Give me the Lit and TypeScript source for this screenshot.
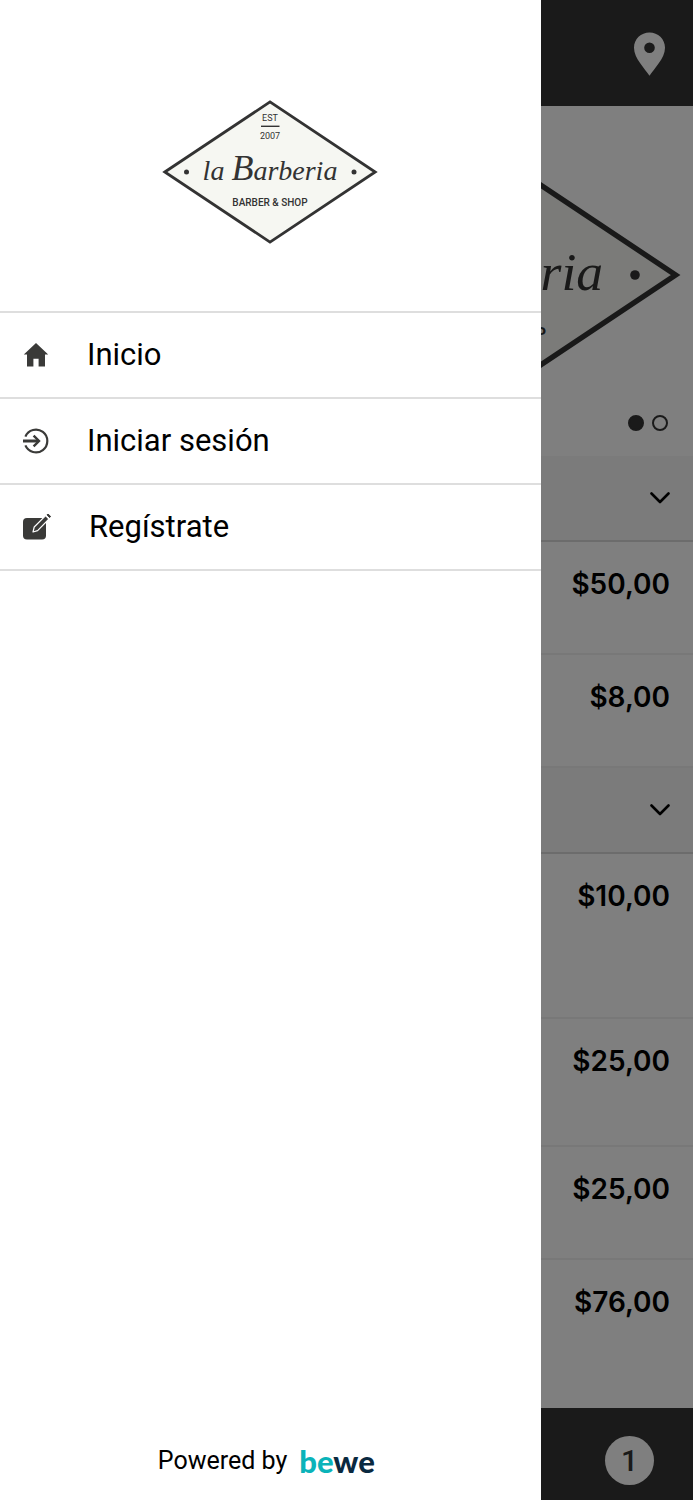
import { LitElement, html, css, svg } from "lit";
import { customElement, property } from "lit/decorators.js";

const ink = "#333333";

const icons = {
  home: html`<svg class="icon" width="26" height="26" viewBox="0 0 26 26" aria-hidden="true">
    <path fill="#3a3a38" d="M13 1 0.8 12.400H4V24.600H10.400V16.800H15.600V24.600H22V12.400H25.200Z" />
  </svg>`,
  login: html`<svg class="icon" width="26" height="26" viewBox="0 0 26 26" fill="none" stroke="#3a3a38" aria-hidden="true">
    <path stroke-width="2.200" d="M2.400 8.600A11.400 11.400 0 1 1 2.400 17.400" />
    <path stroke-width="3" d="M0 13H15" />
    <path stroke-width="2.400" d="M10.600 7.600 16 13 10.600 18.400" />
  </svg>`,
  register: html`<svg class="icon" width="28" height="26" viewBox="0 0 28 26" aria-hidden="true">
    <rect x="0" y="4" width="23" height="21.500" rx="4" fill="#3a3a38" />
    <path d="M10 18 11.200 13 22.600 1.600 26 5 14.600 16.600Z" fill="#3a3a38" stroke="#ffffff" stroke-width="1.200" stroke-linejoin="round" />
    <path d="M24 0.800 25 0 27.600 2.400 26.600 3.600Z" fill="#3a3a38" stroke="#3a3a38" />
  </svg>`,
};

@customElement("barber-logo")
export class BarberLogo extends LitElement {
  static styles = css`
    :host {
      display: block;
    }
    .mark {
      display: block;
      width: 100%;
      height: auto;
    }
    .script {
      font: italic 28px "Liberation Serif", serif;
    }
    .capital {
      font-size: 36px;
    }
    .name {
      font: 500 10px Roboto, sans-serif;
    }
    .small {
      font: 9px Roboto, sans-serif;
    }
  `;

  render() {
    return html`<svg class="mark" viewBox="0 0 216 144" role="img" aria-label="la Barberia Barber & Shop">
      ${svg`
        <path d="M2.800 72 108 1.900 213.200 72 108 142.100Z" fill="#f6f7f2" stroke=${ink} stroke-width="2.800" />
        <circle cx="24.500" cy="72" r="2.500" fill=${ink} />
        <circle cx="192" cy="72" r="2.500" fill=${ink} />
        <path d="M99 26.300H117.500" stroke=${ink} stroke-width="1.400" />
        <g fill=${ink} text-anchor="middle">
          <text class="small" x="108" y="21">EST</text>
          <text class="small" x="108" y="39">2007</text>
          <text class="script" x="108" y="80">la <tspan class="capital">B</tspan>arberia</text>
          <text class="name" x="108" y="106">BARBER &amp; SHOP</text>
        </g>
      `}
    </svg>`;
  }
}

@customElement("price-row")
export class PriceRow extends LitElement {
  @property() amount = "";

  static styles = css`
    :host {
      display: flex;
      justify-content: flex-end;
      box-sizing: border-box;
      padding: 25px 23px 0 24px;
      border-bottom: 2px solid #f0f0f0;
    }
    .amount {
      font: 600 28px/34px Inter, sans-serif;
      color: #000000;
    }
  `;

  render() {
    return html`<span class="amount">${this.amount}</span>`;
  }
}

@customElement("app-root")
export class AppRoot extends LitElement {
  static styles = css`
    :host {
      display: block;
      position: relative;
      min-height: 100vh;
      overflow: hidden;
      font-family: Roboto, sans-serif;
      color: #000000;
    }
    .page {
      display: flex;
      flex-direction: column;
      min-height: 100vh;
      background: #ffffff;
    }
    .bar {
      display: flex;
      align-items: center;
      justify-content: flex-end;
      box-sizing: border-box;
      background: #343434;
    }
    .top {
      height: 106px;
      padding: 2px 28px 0 0;
    }
    .plain {
      display: block;
      padding: 0;
      border: 0;
      background: none;
      font: inherit;
      color: inherit;
    }
    .hero {
      display: flex;
      flex-direction: column;
      align-items: flex-end;
      gap: 2px;
      padding: 31px 12px 25px;
    }
    .hero-logo {
      width: 414px;
    }
    .dots {
      display: flex;
      gap: 8px;
      padding-right: 13px;
    }
    .dot {
      box-sizing: border-box;
      width: 16px;
      height: 16px;
      padding: 0;
      border: 2px solid #343434;
      border-radius: 50%;
      background: transparent;
    }
    .dot.current {
      background: #343434;
    }
    .category {
      display: flex;
      align-items: center;
      justify-content: flex-end;
      box-sizing: border-box;
      height: 86px;
      padding-right: 23px;
      background: #f7f7f7;
      border-bottom: 2px solid #d8d8d8;
    }
    .icon {
      display: block;
      flex: none;
    }
    .row {
      height: 113px;
    }
    .row.medium {
      height: 128px;
    }
    .row.tall {
      height: 165px;
    }
    .row.last {
      height: auto;
      flex: 1;
      border-bottom: 0;
    }
    .bottom {
      height: 92px;
      padding: 12px 39px 0 0;
    }
    .count {
      width: 49px;
      height: 49px;
      padding: 0;
      border: 0;
      border-radius: 50%;
      background: #ffffff;
      color: #343434;
      font: 500 30px/49px Roboto, sans-serif;
      text-align: center;
    }
    .scrim {
      position: absolute;
      inset: 0;
      background: rgba(0, 0, 0, 0.5);
    }
    .drawer {
      position: absolute;
      inset: 0 auto 0 0;
      display: flex;
      flex-direction: column;
      width: 78%;
      background: #ffffff;
    }
    .brand {
      display: flex;
      justify-content: center;
      padding: 100px 0 67px;
    }
    .brand-logo {
      width: 216px;
    }
    .menu {
      display: flex;
      flex-direction: column;
      border-top: 2px solid #dedede;
    }
    .link {
      display: flex;
      align-items: center;
      gap: 38px;
      box-sizing: border-box;
      min-height: 86px;
      padding: 0 23px;
      border-bottom: 2px solid #dedede;
      color: #000000;
      font-size: 31px;
      line-height: 36px;
      text-decoration: none;
    }
    .powered {
      display: flex;
      align-items: center;
      justify-content: center;
      gap: 12px;
      margin-top: auto;
      padding: 0 8px 22px 0;
      font-size: 25px;
      line-height: 34px;
    }
    .bewe {
      font: 900 31px/34px Lato, sans-serif;
      color: #0bb3b9;
      text-decoration: none;
    }
    .navy {
      color: #0a2940;
    }
  `;

  private category() {
    return html`<div class="category">
      <button class="plain" aria-label="Expandir">
        <svg class="icon" width="20" height="14" viewBox="0 0 20 14" fill="none" stroke="#000000" stroke-width="2.600" stroke-linecap="round" stroke-linejoin="round">
          <path d="M1.500 2.500 10 11 18.500 2.500" />
        </svg>
      </button>
    </div>`;
  }

  render() {
    return html`
      <div class="page">
        <header class="bar top">
          <button class="plain" aria-label="Ubicación">
            <svg class="icon" width="31" height="44" viewBox="0 0 31 44">
              <path fill="#ffffff" fill-rule="evenodd" d="M15.500 0.500C7 0.500 0 7 0 15.700C0 26.500 11 36.500 15.500 43.800C20 36.500 31 26.500 31 15.700C31 7 24 0.500 15.500 0.500ZM15.500 10.500A5.300 5.300 0 1 1 15.500 21.100A5.300 5.300 0 1 1 15.500 10.500Z" />
            </svg>
          </button>
        </header>
        <section class="hero">
          <barber-logo class="hero-logo"></barber-logo>
          <div class="dots">
            <button class="dot current" aria-label="1"></button>
            <button class="dot" aria-label="2"></button>
          </div>
        </section>
        ${this.category()}
        <price-row class="row" amount="$50,00"></price-row>
        <price-row class="row" amount="$8,00"></price-row>
        ${this.category()}
        <price-row class="row tall" amount="$10,00"></price-row>
        <price-row class="row medium" amount="$25,00"></price-row>
        <price-row class="row" amount="$25,00"></price-row>
        <price-row class="row last" amount="$76,00"></price-row>
        <footer class="bar bottom">
          <button class="count">1</button>
        </footer>
      </div>
      <div class="scrim"></div>
      <aside class="drawer">
        <div class="brand"><barber-logo class="brand-logo"></barber-logo></div>
        <nav class="menu">
          <a class="link" href="#inicio">${icons.home}<span>Inicio</span></a>
          <a class="link" href="#sesion">${icons.login}<span>Iniciar sesión</span></a>
          <a class="link" href="#registro">${icons.register}<span>Regístrate</span></a>
        </nav>
        <div class="powered">
          <span>Powered by</span>
          <a class="bewe" href="#bewe">be<span class="navy">we</span></a>
        </div>
      </aside>
    `;
  }
}
